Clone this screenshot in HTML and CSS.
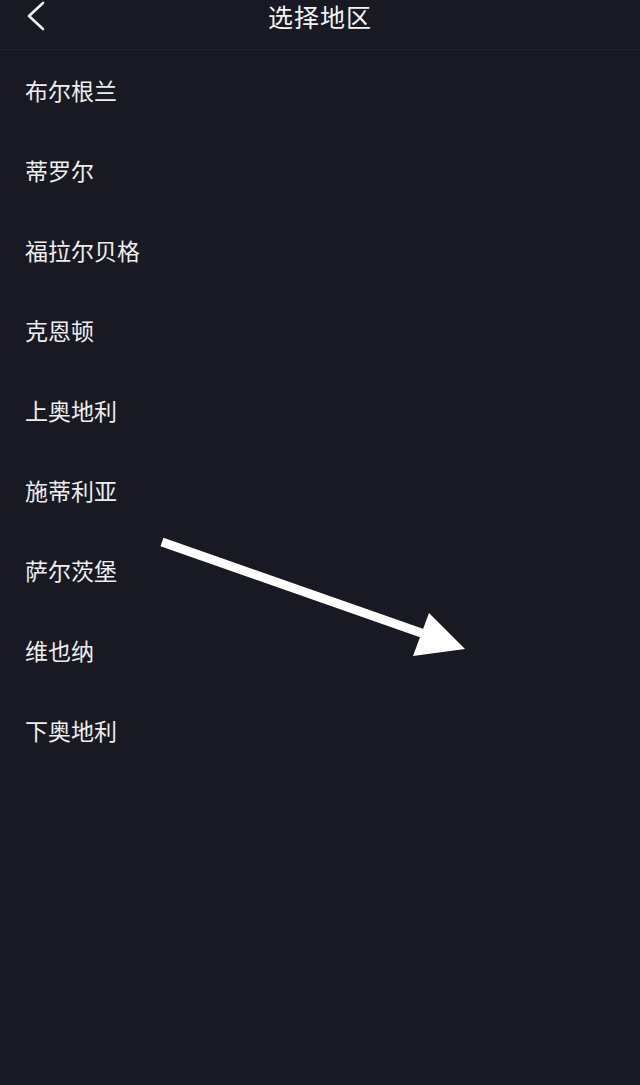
FILE: index.html
```html
<!DOCTYPE html>
<html lang="zh">
<head>
<meta charset="utf-8">
<title>选择地区</title>
<link rel="stylesheet" href="styles.css">
</head>
<body>
<div class="page">
  <header class="topbar">
    <span class="back">
      <svg width="20" height="32" viewBox="0 0 20 32"><polyline points="16,3 2,16 16,29" fill="none" stroke="#f2f2f2" stroke-width="2.6" stroke-linecap="round" stroke-linejoin="round"/></svg>
    </span>
    <h1 class="title">选择地区</h1>
  </header>
  <ul class="list">
    <li class="item">布尔根兰</li>
    <li class="item">蒂罗尔</li>
    <li class="item">福拉尔贝格</li>
    <li class="item">克恩顿</li>
    <li class="item">上奥地利</li>
    <li class="item">施蒂利亚</li>
    <li class="item">萨尔茨堡</li>
    <li class="item">维也纳</li>
    <li class="item">下奥地利</li>
  </ul>
  <svg class="arrow" width="640" height="1085" viewBox="0 0 640 1085">
    <line x1="162" y1="542" x2="430" y2="636" stroke="#ffffff" stroke-width="9"/>
    <polygon points="413,656 429,613 465,649" fill="#ffffff"/>
  </svg>
</div>
</body>
</html>
```
FILE: styles.css
```css
* { box-sizing: border-box; }
html, body {
  margin: 0;
  padding: 0;
  background: #181922;
}
body {
  font-family: "Noto Sans CJK SC", "Noto Sans", sans-serif;
  color: #f2f2f2;
}
.page {
  position: relative;
  width: 640px;
  height: 1085px;
  overflow: hidden;
  background: #181922;
}
.topbar {
  position: relative;
  height: 50px;
  padding-top: 2px;
  border-bottom: 1px solid #22232d;
  display: flex;
  align-items: flex-start;
  justify-content: center;
}
.back {
  position: absolute;
  left: 27px;
  top: 0;
  width: 20px;
  height: 32px;
  display: block;
}
.back svg { display: block; }
.title {
  margin: 0;
  font-size: 25px;
  font-weight: 400;
  line-height: 28px;
  letter-spacing: 1px;
  color: #f4f4f4;
}
.list {
  list-style: none;
  margin: 0;
  padding: 0;
}
.item {
  height: 80px;
  display: flex;
  align-items: center;
  padding-left: 25px;
  font-size: 23px;
  line-height: 1;
  color: #eeeeee;
}
.arrow {
  position: absolute;
  left: 0;
  top: 0;
  pointer-events: none;
}
```
